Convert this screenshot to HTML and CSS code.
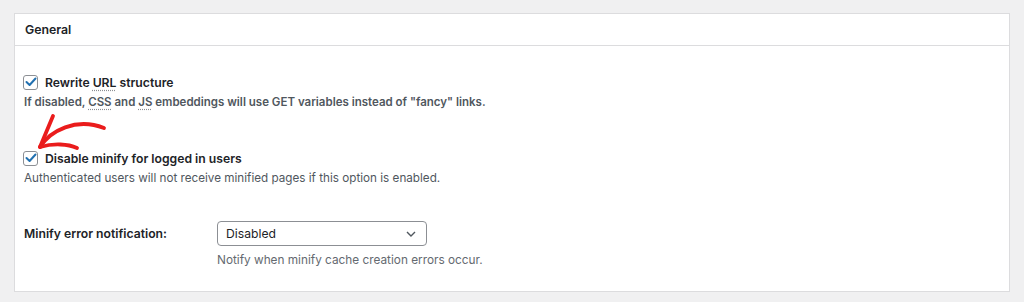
FILE: index.html
```html
<!DOCTYPE html>
<html lang="en">
<head>
    <meta charset="UTF-8">
    <meta name="viewport" content="width=device-width, initial-scale=1.0">
    <title>General settings</title>
    <link rel="stylesheet" href="styles.css">
</head>
<body>
    <div class="postbox">
        <h3 class="postbox-title">General</h3>

        <div class="inside">
            <div class="option">
                <label class="check-label">
                    <span class="check-box"><svg width="12" height="10" viewBox="0 0 12 10"><path d="M1.5 5 L4.6 8 L10.5 1.5" /></svg></span>
                    <span>Rewrite <abbr title="Uniform Resource Locator">URL</abbr> structure</span>
                </label>
                <p class="desc desc-strong">If disabled, <abbr title="Cascading Style Sheets">CSS</abbr> and <abbr title="JavaScript">JS</abbr> embeddings will use GET variables instead of "fancy" links.</p>
            </div>

            <div class="option option-marked">
                <svg class="arrow" width="90" height="50" viewBox="0 0 90 50">
                    <path d="M6 36 C16 20 42 6 70 17" />
                    <path d="M6 36 L19 5" />
                    <path d="M6 36 C20 32 34 33 43 37" />
                </svg>
                <label class="check-label">
                    <span class="check-box"><svg width="12" height="10" viewBox="0 0 12 10"><path d="M1.5 5 L4.6 8 L10.5 1.5" /></svg></span>
                    <span>Disable minify for logged in users</span>
                </label>
                <p class="desc">Authenticated users will not receive minified pages if this option is enabled.</p>
            </div>

            <div class="field-row">
                <div class="field-label">Minify error notification:</div>
                <div class="field-control">
                    <div class="select">
                        <span>Disabled</span>
                        <svg width="10" height="6" viewBox="0 0 10 6"><path d="M1 1 L5 5 L9 1" /></svg>
                    </div>
                    <p class="note">Notify when minify cache creation errors occur.</p>
                </div>
            </div>
        </div>
    </div>
</body>
</html>
```

FILE: styles.css
```css
body {
    margin: 0;
    padding: 13px 14px 10px 14px;
    background-color: #f0f0f1;
    font-family: Inter, "Noto Sans", sans-serif;
    font-size: 12px;
    color: #1d2327;
}
.postbox {
    background: #fff;
    border: 1px solid #dcdcde;
    height: 279px;
    box-sizing: border-box;
}
.postbox-title {
    margin: 0;
    height: 31px;
    line-height: 31px;
    padding: 0 10px;
    font-size: 12.3px;
    font-weight: 600;
    border-bottom: 1px solid #dcdcde;
}
.inside {
    padding: 26px 9px 0 9px;
}
.option {
    position: relative;
}
.option-marked {
    margin-top: 36px;
}
.check-label {
    display: flex;
    align-items: center;
    height: 20px;
    font-size: 12.2px;
    font-weight: 600;
}
.check-box {
    width: 15px;
    height: 15px;
    box-sizing: border-box;
    margin: 0 7px 0 -1px;
    border: 1px solid #8c8f94;
    border-radius: 3px;
    display: flex;
    align-items: center;
    justify-content: center;
}
.check-box svg {
    fill: none;
    stroke: #2271b1;
    stroke-width: 2;
    stroke-linecap: round;
    stroke-linejoin: round;
}
abbr {
    text-decoration: underline dotted #8c8f94;
    text-underline-offset: 3px;
}
.desc {
    margin: 0;
    line-height: 20px;
    font-size: 11.7px;
    color: #50575e;
}
.desc-strong {
    font-size: 11.5px;
    font-weight: 600;
}
.arrow {
    position: absolute;
    left: 10px;
    top: -37px;
    fill: none;
    stroke: #ea1c1c;
    stroke-width: 3.8;
    stroke-linecap: round;
}
.field-row {
    display: flex;
    margin-top: 33px;
}
.field-label {
    width: 193px;
    height: 25px;
    line-height: 25px;
    font-size: 12.2px;
    font-weight: 600;
}
.select {
    width: 210px;
    height: 25px;
    box-sizing: border-box;
    border: 1px solid #8c8f94;
    border-radius: 4px;
    padding: 0 10px 0 8px;
    display: flex;
    align-items: center;
    justify-content: space-between;
    font-size: 12.2px;
}
.select svg {
    fill: none;
    stroke: #50575e;
    stroke-width: 1.4;
}
.note {
    margin: 4px 0 0 0;
    line-height: 20px;
    font-size: 11.8px;
    color: #646970;
}
```
